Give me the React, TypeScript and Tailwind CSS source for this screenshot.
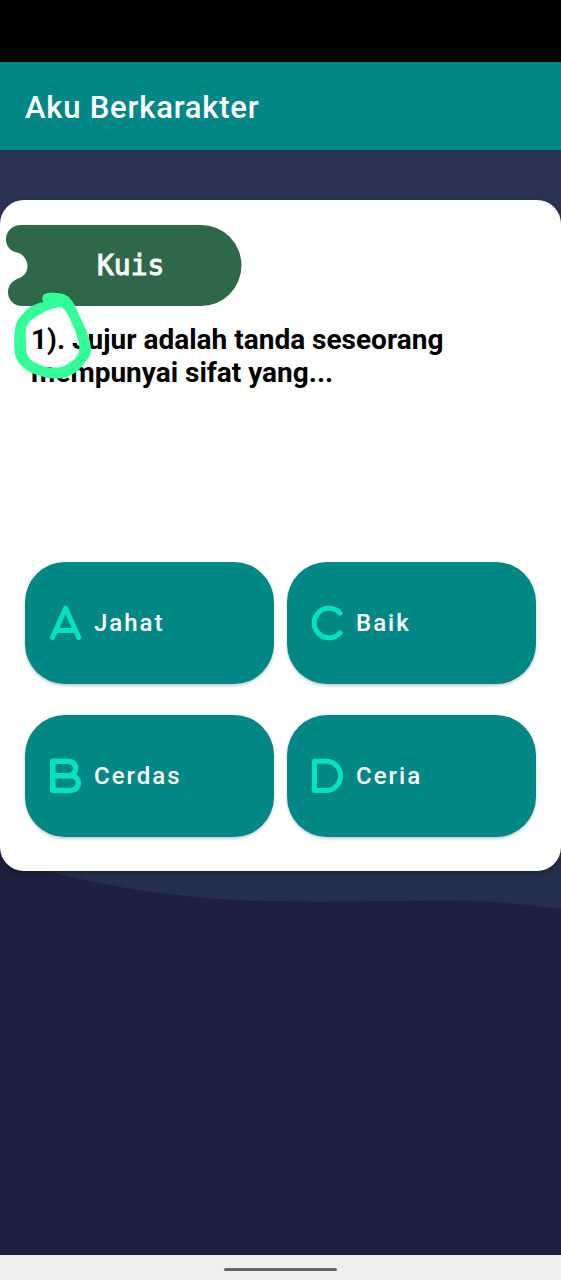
import type { ReactNode } from "react";

const options: { label: string; glyph: ReactNode }[] = [
  {
    label: "Jahat",
    glyph: <path d="M2.500 32.500 15.600 3.200 28.800 32.500M6.500 25.500h18" />,
  },
  {
    label: "Cerdas",
    glyph: (
      <path
        strokeWidth="5.500"
        d="M2.750 3.250H18.500a7.100 7.100 0 0 1 0 14.400H2.750M18.500 17.650H21a7.400 7.400 0 0 1 0 14.800H2.750V3.250"
      />
    ),
  },
  {
    label: "Baik",
    glyph: <path d="M28 8.100A14.800 14.800 0 1 0 28 27.900" />,
  },
  {
    label: "Ceria",
    glyph: <path d="M2.500 3.250H14a14.600 14.600 0 0 1 0 29.200H2.500Z" />,
  },
];

function Backdrop() {
  return (
    <svg
      className="absolute inset-0 -z-10 h-full w-full"
      viewBox="0 0 561 1105"
      preserveAspectRatio="none"
      aria-hidden="true"
    >
      <defs>
        <linearGradient id="dusk" x1="0" y1="0" x2="0" y2="1">
          <stop offset="0" stopColor="#2a3452" />
          <stop offset="1" stopColor="#242f4b" />
        </linearGradient>
      </defs>
      <rect width="561" height="1105" fill="#1e2040" />
      <path
        d="M0 0H561V759C520 753 485 750 425 750.500C350 751.500 290 753 220 749C150 744 100 734 50 722C30 716 15 710 0 702Z"
        fill="url(#dusk)"
      />
    </svg>
  );
}

function Badge() {
  return (
    <div className="relative isolate ml-[6px] flex h-[81px] w-[236px] items-center pl-[91px]">
      <svg
        className="absolute inset-0 -z-10 h-full w-full"
        viewBox="0 0 236 81"
        aria-hidden="true"
      >
        <path
          d="M15 0H195A40.500 40.500 0 0 1 195 81H16C8 81 2 75 2 67C2 61 6 56 11 54C18 52 21.500 47 21.500 41C21.500 35 17 29 11 27.500C4 26 0 21 0 14C0 6 7 0 15 0Z"
          fill="#2f6848"
        />
      </svg>
      <h2 className="font-['DejaVu_Sans_Mono',monospace] text-[28px] leading-8 text-white [-webkit-text-stroke:1px_white]">
        Kuis
      </h2>
    </div>
  );
}

function PenCircle() {
  return (
    <svg
      className="absolute -top-[31px] left-[12px] h-[88px] w-[82px]"
      viewBox="12 292 82 88"
      aria-hidden="true"
    >
      <path
        fill="#33ff99"
        fillRule="evenodd"
        d="M48 293C52 292.500 57 292.500 61 293.500C65 294.500 68 296 70 298.500C73 302 75 305 76.500 309C78 313 80 317 82 321C84.500 326 87 332 88.500 337C90 341 91 345 91 349C91 353 90 356 88 358.500C86 361 85 363 83 365C80 369 77 372 73 374C68 377 63 378.500 57 378.500C52 378.500 48 378 44 377C39 375.500 34 374 30 372C26 370 22 366.500 19 363C16 359 15 355 14.500 351C14 343 14 335 15 328C16 323 18 319 21 316C24 312 27 309 31 306.500C35 304 39 303 43.500 302C42.500 300.500 42 299 42.500 297C43 295 45 293.300 48 293ZM60.500 307C55 308 50 309 46 311C41 313.500 37 316 33 319C29 321.500 26.500 324.500 26 328C25.500 333 25.800 338 26 343C26 348 26 352 27.500 355C29 358.500 31 360.500 34 362C38 364 42 366 46 367C50 367.500 54 367.700 58 367.500C63 367 67 365 71 362C74 360 77 357 78.500 353.500C79.500 350 79.500 347 79 344C77.500 338 76 333 74 328C72 323 70 319 68 315C66 311.500 64 308 60.500 307Z"
      />
    </svg>
  );
}

export default function App() {
  return (
    <div className="flex min-h-screen flex-col bg-[#1e2040] font-[Roboto,sans-serif]">
      <div className="h-[62px] bg-black" />
      <header className="flex h-[88px] items-center bg-[#018786] px-[25px]">
        <h1 className="pt-1 text-[31px] leading-9 font-medium tracking-wide text-white">
          Aku Berkarakter
        </h1>
      </header>
      <main className="relative isolate flex-1 pt-[50px]">
        <Backdrop />
        <section className="rounded-[24px] bg-white pt-[25px] pb-[34px] shadow-[0_2px_5px_rgba(0,0,0,0.35)]">
          <Badge />
          <div className="relative mt-[17px] min-h-[239px] px-[31px]">
            <p className="text-[28px] leading-[33px] font-bold text-black">
              1). Jujur adalah tanda seseorang mempunyai sifat yang...
            </p>
            <PenCircle />
          </div>
          <div className="grid grid-flow-col grid-cols-2 grid-rows-2 gap-x-[13px] gap-y-[31px] px-[25px]">
            {options.map(({ label, glyph }) => (
              <button
                key={label}
                type="button"
                className="flex h-[122px] items-center gap-[12px] rounded-[40px] bg-[#018786] pl-[25px] text-[24px] leading-8 font-medium tracking-[2px] text-white shadow-[0_2px_3px_rgba(0,0,0,0.2)]"
              >
                <svg
                  className="h-9 w-8 shrink-0"
                  viewBox="0 0 32 36"
                  fill="none"
                  stroke="#03e3c0"
                  strokeWidth="5"
                  strokeLinecap="round"
                  strokeLinejoin="round"
                  aria-hidden="true"
                >
                  {glyph}
                </svg>
                <span>{label}</span>
              </button>
            ))}
          </div>
        </section>
      </main>
      <footer className="flex h-[25px] items-center justify-center bg-[#efefef] pt-[3px]">
        <div className="h-[3px] w-[113px] rounded-full bg-[#666666]" />
      </footer>
    </div>
  );
}
